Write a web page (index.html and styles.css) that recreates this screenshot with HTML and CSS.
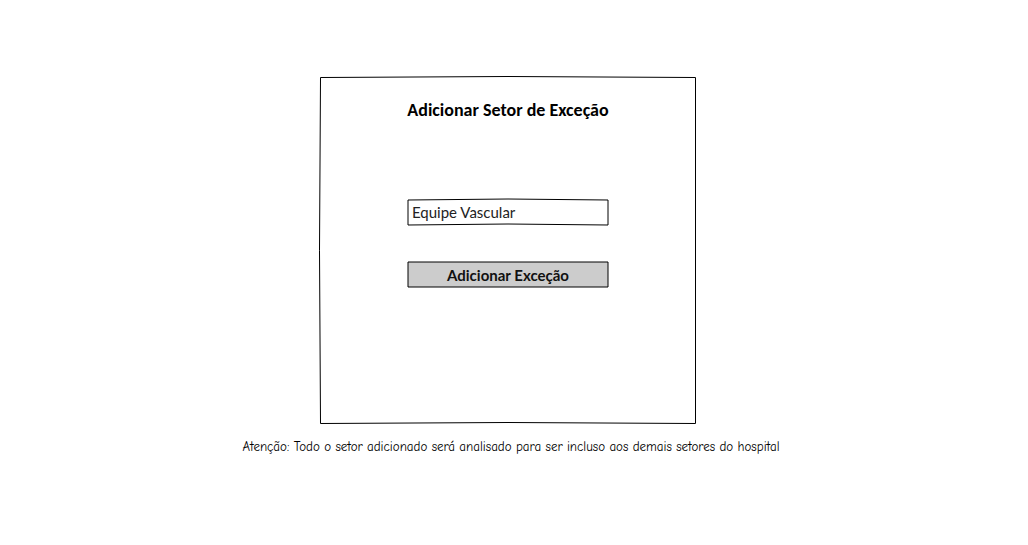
FILE: index.html
```html
<!DOCTYPE html>
<html lang="pt-BR">
<head>
<meta charset="utf-8">
<meta name="viewport" content="width=device-width, initial-scale=1">
<title>Adicionar Setor de Exceção</title>
<link rel="stylesheet" href="styles.css">
</head>
<body>
<main class="page">
  <form class="card sketch">
    <svg class="outline" viewBox="0 0 376 347" preserveAspectRatio="none" aria-hidden="true">
      <path d="M.5 .5Q188 -1.5 375.5 .5V346.5Q188 344.5 .5 346.5Q-1.5 173 .5 .5Z"/>
    </svg>
    <h1 class="title">Adicionar Setor de Exceção</h1>
    <div class="control sketch">
      <svg class="outline" viewBox="0 0 202 26" preserveAspectRatio="none" aria-hidden="true">
        <path d="M1 1Q101 -1 201 1V26Q101 24 1 26Z"/>
      </svg>
      <input class="field" type="text" value="Equipe Vascular" aria-label="Setor">
    </div>
    <div class="control sketch">
      <svg class="outline outline-filled" viewBox="0 0 202 26" preserveAspectRatio="none" aria-hidden="true">
        <path d="M1 1H201V26H1Z"/>
      </svg>
      <button class="submit" type="button">Adicionar Exceção</button>
    </div>
  </form>
  <p class="note">Atenção: Todo o setor adicionado será analisado para ser incluso aos demais setores do hospital</p>
</main>
</body>
</html>
```
FILE: styles.css
```css
* {
  box-sizing: border-box;
}

body {
  margin: 0;
  background: #fff;
  color: #000;
  font-family: Lato, sans-serif;
}

.page {
  display: flex;
  flex-direction: column;
  align-items: center;
  padding: 77px 12px 24px 0;
}

.sketch {
  position: relative;
}

.outline {
  position: absolute;
  inset: 0;
  width: 100%;
  height: 100%;
  overflow: visible;
  fill: none;
  stroke: #000;
  stroke-width: 1;
  pointer-events: none;
}

.outline-filled {
  fill: #ccc;
}

.card {
  display: flex;
  flex-direction: column;
  align-items: center;
  gap: 36px;
  width: 100%;
  max-width: 376px;
  padding: 22px 24px 137px;
}

.title {
  margin: 0 0 42px;
  font-family: Carlito, Lato, sans-serif;
  font-size: 18px;
  line-height: 22px;
  font-weight: 700;
}

.control {
  display: flex;
  width: 100%;
  max-width: 202px;
}

.field,
.submit {
  position: relative;
  width: 100%;
  height: 26px;
  margin: 0;
  border: 0;
  background: transparent;
  color: #000;
  font-family: inherit;
  font-size: 15px;
  line-height: 20px;
}

.field {
  padding: 2px 5px;
  color: #222;
}

.submit {
  padding: 4px 4px 2px;
  color: #111;
  font-weight: 700;
}

.note {
  margin: 13px 0 0;
  padding-left: 6px;
  font-family: "Comic Sans MS", "Comic Neue", "Open Sans", sans-serif;
  font-size: 13px;
  line-height: 20px;
  text-align: center;
}
```
